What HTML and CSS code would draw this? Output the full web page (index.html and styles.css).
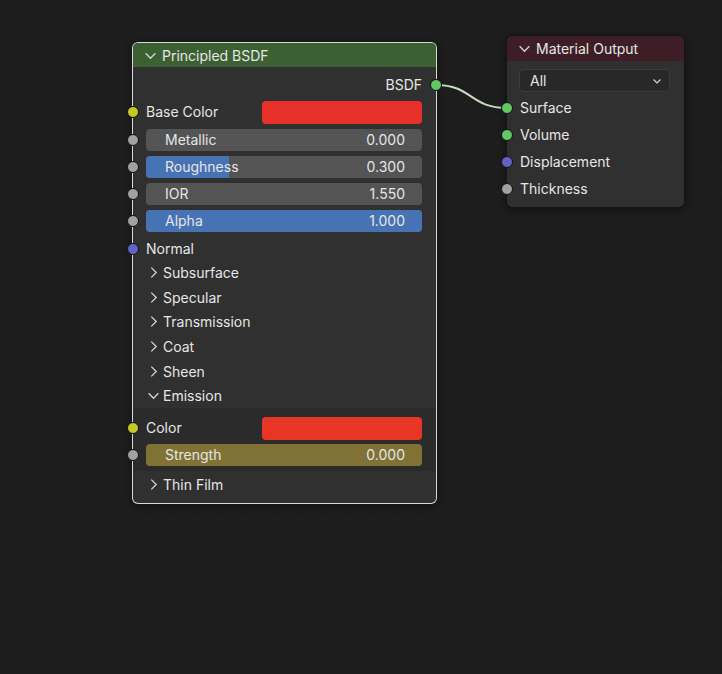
FILE: index.html
```html
<!DOCTYPE html>
<html lang="en">
<head>
<meta charset="UTF-8">
<meta name="viewport" content="width=device-width, initial-scale=1.0">
<title>Shader Editor</title>
<link rel="stylesheet" href="styles.css">
</head>
<body>

<div class="editor">
    <svg class="links" width="722" height="674">
        <path d="M436 85 C 472 85, 470 108, 507 108" />
    </svg>

    <div class="node node-bsdf selected">
        <div class="node-header header-shader">
            <svg class="chevron" viewBox="0 0 12 12"><polyline points="1.5,4 6,8.5 10.5,4" /></svg>
            Principled BSDF
        </div>
        <div class="node-body">
            <div class="row row-output">
                BSDF
                <span class="socket socket-out socket-shader"></span>
            </div>
            <div class="row">
                <span class="socket socket-color"></span>
                <span class="row-label">Base Color</span>
                <span class="swatch"></span>
            </div>
            <div class="row row-spaced">
                <span class="socket socket-float"></span>
                <div class="slider"><span>Metallic</span><span>0.000</span></div>
            </div>
            <div class="row">
                <span class="socket socket-float"></span>
                <div class="slider"><div class="slider-fill" style="width: 30%"></div><span>Roughness</span><span>0.300</span></div>
            </div>
            <div class="row">
                <span class="socket socket-float"></span>
                <div class="slider"><span>IOR</span><span>1.550</span></div>
            </div>
            <div class="row">
                <span class="socket socket-float"></span>
                <div class="slider"><div class="slider-fill" style="width: 100%"></div><span>Alpha</span><span>1.000</span></div>
            </div>
            <div class="row row-spaced">
                <span class="socket socket-vector"></span>
                <span class="row-label">Normal</span>
            </div>

            <div class="panel-head"><svg class="chevron" viewBox="0 0 12 12"><polyline points="4,1.5 8.5,6 4,10.5" /></svg>Subsurface</div>
            <div class="panel-head"><svg class="chevron" viewBox="0 0 12 12"><polyline points="4,1.5 8.5,6 4,10.5" /></svg>Specular</div>
            <div class="panel-head"><svg class="chevron" viewBox="0 0 12 12"><polyline points="4,1.5 8.5,6 4,10.5" /></svg>Transmission</div>
            <div class="panel-head"><svg class="chevron" viewBox="0 0 12 12"><polyline points="4,1.5 8.5,6 4,10.5" /></svg>Coat</div>
            <div class="panel-head"><svg class="chevron" viewBox="0 0 12 12"><polyline points="4,1.5 8.5,6 4,10.5" /></svg>Sheen</div>
            <div class="panel-head"><svg class="chevron" viewBox="0 0 12 12"><polyline points="1.5,4 6,8.5 10.5,4" /></svg>Emission</div>
            <div class="panel-content">
                <div class="row">
                    <span class="socket socket-color"></span>
                    <span class="row-label">Color</span>
                    <span class="swatch swatch-emission"></span>
                </div>
                <div class="row">
                    <span class="socket socket-float"></span>
                    <div class="slider slider-olive"><span>Strength</span><span>0.000</span></div>
                </div>
            </div>
            <div class="panel-head panel-last"><svg class="chevron" viewBox="0 0 12 12"><polyline points="4,1.5 8.5,6 4,10.5" /></svg>Thin Film</div>
        </div>
    </div>

    <div class="node node-output">
        <div class="node-header header-output">
            <svg class="chevron" viewBox="0 0 12 12"><polyline points="1.5,4 6,8.5 10.5,4" /></svg>
            Material Output
        </div>
        <div class="node-body output-body">
            <div class="dropdown">
                All
                <svg class="dropdown-arrow" viewBox="0 0 12 12"><polyline points="2.5,4.5 6,8 9.5,4.5" /></svg>
            </div>
            <div class="row">
                <span class="socket socket-shader"></span>
                <span class="row-label">Surface</span>
            </div>
            <div class="row">
                <span class="socket socket-shader"></span>
                <span class="row-label">Volume</span>
            </div>
            <div class="row">
                <span class="socket socket-vector"></span>
                <span class="row-label">Displacement</span>
            </div>
            <div class="row">
                <span class="socket socket-float"></span>
                <span class="row-label">Thickness</span>
            </div>
        </div>
    </div>
</div>

</body>
</html>
```

FILE: styles.css
```css
body {
    margin: 0;
    padding: 0;
    background-color: #1d1d1d;
    font-family: Inter, "Noto Sans", sans-serif;
    font-size: 14px;
    color: #e6e6e6;
}
.editor {
    position: relative;
    width: 722px;
    height: 674px;
    overflow: hidden;
    background-image: radial-gradient(circle, #232323 0.8px, transparent 1.2px);
    background-size: 25px 25px;
    background-position: 10px 5px;
}
/* links sit under the nodes so the sockets are drawn on top */
.links {
    position: absolute;
    left: 0;
    top: 0;
    z-index: 0;
    pointer-events: none;
}
.links path {
    fill: none;
    stroke: #c6dcbf;
    stroke-width: 2;
}
.node {
    position: absolute;
    box-sizing: border-box;
    background-color: #303030;
    border-radius: 5px;
    box-shadow: 0 0 0 1px #141414, 0 2px 8px rgba(0, 0, 0, 0.55);
    z-index: 1;
}
.node.selected {
    box-shadow: 0 0 0 1px #d8d8d8, 0 2px 8px rgba(0, 0, 0, 0.55);
}
.node-bsdf {
    left: 133px;
    top: 43px;
    width: 303px;
}
.node-output {
    left: 507px;
    top: 36px;
    width: 177px;
}
.node-header {
    display: flex;
    align-items: center;
    gap: 5px;
    height: 24px;
    padding-left: 11px;
    border-radius: 5px 5px 0 0;
    color: #e6e6e6;
}
.header-shader {
    background-color: #3b6133;
}
.header-output {
    height: 25px;
    background-color: #3d1e27;
}
.chevron {
    width: 13px;
    height: 13px;
    flex-shrink: 0;
}
.chevron polyline,
.dropdown-arrow polyline {
    fill: none;
    stroke: #d6d6d6;
    stroke-width: 1.2;
}
.node-body {
    padding: 7px 14px 5px 13px;
}
.output-body {
    padding: 8px 14px 7px 13px;
}
.row {
    position: relative;
    display: flex;
    align-items: center;
    height: 22px;
    line-height: 22px;
    margin-top: 5px;
}
.row:first-child {
    margin-top: 0;
}
.row-spaced {
    margin-top: 6px;
}
.row-output {
    justify-content: flex-end;
}
.row-label {
    flex: 1;
}
.socket {
    position: absolute;
    left: -19px;
    top: 5px;
    width: 10px;
    height: 10px;
    border-radius: 50%;
    border: 1px solid #111;
}
.socket-out {
    left: auto;
    right: -20px;
}
.socket-color {
    background-color: #c7c729;
}
.socket-float {
    background-color: #a1a1a1;
}
.socket-vector {
    background-color: #6363c7;
}
.socket-shader {
    background-color: #63c763;
}
.swatch {
    width: 160px;
    height: 23px;
    border-radius: 4px;
    background-color: #e8302b;
}
.swatch-emission {
    background-color: #e83526;
}
.slider {
    position: relative;
    flex: 1;
    display: flex;
    justify-content: space-between;
    height: 22px;
    padding: 0 17px 0 19px;
    border-radius: 4px;
    background-color: #545454;
    overflow: hidden;
}
.slider span {
    position: relative;
}
.slider-fill {
    position: absolute;
    left: 0;
    top: 0;
    bottom: 0;
    background-color: #4772b3;
}
.slider-olive {
    background-color: #807235;
}
.panel-head {
    display: flex;
    align-items: center;
    gap: 3px;
    height: 24.7px;
    padding-left: 1px;
}
.panel-content {
    margin: 0 -14px 0 -13px;
    padding: 9px 14px 5px 13px;
    background-color: #2b2b2b;
}
.panel-last {
    height: 27px;
}
.dropdown {
    display: flex;
    align-items: center;
    justify-content: space-between;
    box-sizing: border-box;
    height: 23px;
    margin-left: -1px;
    padding: 0 6px 0 10px;
    border: 1px solid #3c3c3c;
    border-radius: 4px;
    background-color: #282828;
}
.dropdown-arrow {
    width: 12px;
    height: 12px;
}
.output-body .dropdown + .row {
    margin-top: 5px;
}
```
